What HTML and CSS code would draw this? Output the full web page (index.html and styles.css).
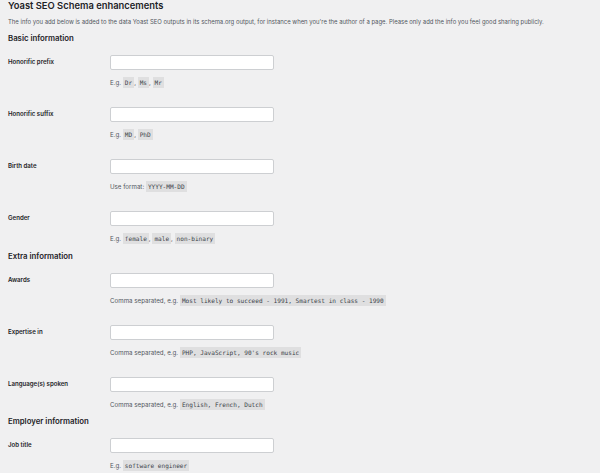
FILE: index.html
```html
<!DOCTYPE html>
<html lang="en">
<head>
<meta charset="utf-8">
<title>Yoast SEO Schema enhancements</title>
<link rel="stylesheet" href="styles.css">
</head>
<body>
<main class="page">
  <h1 class="title">Yoast SEO Schema enhancements</h1>
  <p class="intro">The info you add below is added to the data Yoast SEO outputs in its schema.org output, for instance when you're the author of a page. Please only add the info you feel good sharing publicly.</p>

  <section class="section">
    <h2 class="section-title">Basic information</h2>
    <div class="rows">
      <div class="row">
        <label class="label">Honorific prefix</label>
        <div class="field">
          <input class="input" type="text">
          <p class="desc">E.g. <code>Dr</code>, <code>Ms</code>, <code>Mr</code></p>
        </div>
      </div>
      <div class="row">
        <label class="label">Honorific suffix</label>
        <div class="field">
          <input class="input" type="text">
          <p class="desc">E.g. <code>MD</code>, <code>PhD</code></p>
        </div>
      </div>
      <div class="row">
        <label class="label">Birth date</label>
        <div class="field">
          <input class="input" type="text">
          <p class="desc">Use format: <code>YYYY-MM-DD</code></p>
        </div>
      </div>
      <div class="row">
        <label class="label">Gender</label>
        <div class="field">
          <input class="input" type="text">
          <p class="desc">E.g. <code>female</code>, <code>male</code>, <code>non-binary</code></p>
        </div>
      </div>
    </div>
  </section>

  <section class="section">
    <h2 class="section-title">Extra information</h2>
    <div class="rows">
      <div class="row">
        <label class="label">Awards</label>
        <div class="field">
          <input class="input" type="text">
          <p class="desc">Comma separated, e.g. <code>Most likely to succeed - 1991, Smartest in class - 1990</code></p>
        </div>
      </div>
      <div class="row">
        <label class="label">Expertise in</label>
        <div class="field">
          <input class="input" type="text">
          <p class="desc">Comma separated, e.g. <code>PHP, JavaScript, 90's rock music</code></p>
        </div>
      </div>
      <div class="row">
        <label class="label">Language(s) spoken</label>
        <div class="field">
          <input class="input" type="text">
          <p class="desc">Comma separated, e.g. <code>English, French, Dutch</code></p>
        </div>
      </div>
    </div>
  </section>

  <section class="section">
    <h2 class="section-title">Employer information</h2>
    <div class="rows">
      <div class="row">
        <label class="label">Job title</label>
        <div class="field">
          <input class="input" type="text">
          <p class="desc">E.g. <code>software engineer</code></p>
        </div>
      </div>
    </div>
  </section>
</main>
</body>
</html>
```

FILE: styles.css
```css
html, body {
  margin: 0;
  padding: 0;
  background: #f0f0f1;
}

body {
  font-family: Inter, "Open Sans", "Liberation Sans", sans-serif;
  color: #1d2327;
}

.page {
  padding: 0 8px;
}

.title {
  margin: 0;
  font-size: 9.4px;
  line-height: 12px;
  font-weight: 600;
}

.intro {
  margin: 5.5px 0 0;
  font-size: 5.95px;
  line-height: 8px;
  color: #50575e;
  white-space: nowrap;
}

.section-title {
  margin: 7.5px 0 12px;
  font-size: 7.8px;
  line-height: 10px;
  font-weight: 600;
}

.section + .section .section-title {
  margin-top: 6.5px;
}

.rows {
  display: flex;
  flex-direction: column;
  gap: 19px;
}

.row {
  display: grid;
  grid-template-columns: 102px 1fr;
  align-items: start;
}

.label {
  font-size: 6.1px;
  line-height: 13px;
  font-weight: 600;
  color: #1d2327;
}

.field {
  display: flex;
  flex-direction: column;
}

.input {
  box-sizing: border-box;
  width: 164px;
  height: 15px;
  margin: 0;
  padding: 0 3px;
  background: #fff;
  border: 1px solid #cdcfd2;
  border-radius: 2px;
  box-shadow: none;
}

.desc {
  margin: 8px 0 0;
  font-size: 6.2px;
  line-height: 10px;
  color: #50575e;
  white-space: nowrap;
}

.desc code {
  font-family: "DejaVu Sans Mono", "Liberation Mono", monospace;
  font-size: 6.1px;
  padding: 2px 2px;
  background: rgba(0, 0, 0, 0.07);
  color: #3c434a;
}
```
